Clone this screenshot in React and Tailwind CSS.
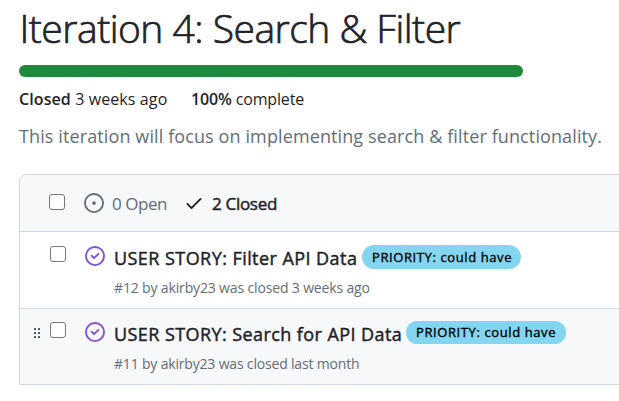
function Checkbox() {
  return (
    <span
      role="checkbox"
      aria-checked="false"
      className="block h-4 w-4 shrink-0 rounded-[3px] border border-[#767676] bg-white"
    />
  );
}

function OpenIcon() {
  return (
    <svg width="20" height="20" viewBox="0 0 16 16" fill="#656d76" className="ml-[18.5px] block shrink-0">
      <path d="M8 9.5a1.5 1.5 0 1 0 0-3 1.5 1.5 0 0 0 0 3Z" />
      <path d="M8 0a8 8 0 1 1 0 16A8 8 0 0 1 8 0ZM1.5 8a6.5 6.5 0 1 0 13 0 6.5 6.5 0 0 0-13 0Z" />
    </svg>
  );
}

function CheckIcon() {
  return (
    <svg width="20" height="20" viewBox="0 0 16 16" fill="#1f2328" className="ml-[17px] block shrink-0">
      <path d="M13.78 4.22a.75.75 0 0 1 0 1.06l-7.25 7.25a.75.75 0 0 1-1.06 0L2.22 9.28a.751.751 0 0 1 .018-1.042.751.751 0 0 1 1.042-.018L6 10.94l6.72-6.72a.75.75 0 0 1 1.06 0Z" />
    </svg>
  );
}

function ClosedIcon() {
  return (
    <svg width="20" height="20" viewBox="0 0 16 16" fill="#8250df" className="block">
      <path d="M11.28 6.78a.75.75 0 0 0-1.06-1.06L7.25 8.69 5.78 7.22a.75.75 0 0 0-1.06 1.06l2 2a.75.75 0 0 0 1.06 0l3.5-3.5Z" />
      <path d="M16 8A8 8 0 1 1 0 8a8 8 0 0 1 16 0Zm-1.5 0a6.5 6.5 0 1 0-13 0 6.5 6.5 0 0 0 13 0Z" />
    </svg>
  );
}

function DragHandle() {
  return (
    <svg width="8" height="11" viewBox="0 0 8 11" fill="#424a53" className="block">
      {[0, 4, 8].map((y) =>
        [0, 4].map((x) => <rect key={x + "-" + y} x={x} y={y} width="2" height="2" rx="0.6" />)
      )}
    </svg>
  );
}

function Issue({ title, titleClass, meta, metaClass, labelClass, hovered }) {
  return (
    <li
      className={
        hovered
          ? "flex h-[76px] border-t border-[#d8dee4] bg-[#f6f8fa]"
          : "flex h-[76px] bg-white"
      }
    >
      <div className="w-[30px] shrink-0 pt-[19px] pl-[14px]">{hovered && <DragHandle />}</div>
      <div className={hovered ? "w-[34.5px] shrink-0 pt-[13px]" : "w-[34.5px] shrink-0 pt-[14px]"}>
        <Checkbox />
      </div>
      <div className={hovered ? "w-[29.5px] shrink-0 pt-[13.4px]" : "w-[29.5px] shrink-0 pt-[14.4px]"}>
        <ClosedIcon />
      </div>
      <div className="min-w-0">
        <div className={hovered ? "flex h-[39px] items-start pt-[11px]" : "flex h-[40px] items-start pt-[12px]"}>
          <h3 className={"h-7 whitespace-nowrap text-lg leading-7 [-webkit-text-stroke:0.45px_#1f2328] " + titleClass}>{title}</h3>
          <span
            className={
              "ml-[5px] flex items-center rounded-full bg-[#84d5f0] pb-px pl-[10px] text-[13px] leading-5 whitespace-nowrap text-black [-webkit-text-stroke:0.35px_#000] " +
              labelClass
            }
          >
            PRIORITY: could have
          </span>
        </div>
        <p className={"mt-[6px] text-[14px] leading-5 whitespace-nowrap text-[#656d76] " + metaClass}>{meta}</p>
      </div>
    </li>
  );
}

export default function App() {
  return (
    <main className="h-[401px] overflow-hidden bg-white pl-[19px] font-['Open_Sans',sans-serif] text-[#1f2328]">
      <h1 className="h-[65px] pt-[2px] pl-[0.5px] text-[39px] leading-[52px] font-light whitespace-nowrap [-webkit-text-stroke:0.7px_#1f2328]">
        <span className="tracking-[-0.5px]">Iteration 4: Search &amp; Filter</span>
      </h1>
      <div className="h-3 w-[504px] rounded-full bg-[#1f883d]" />
      <div className="flex h-[44px] gap-6 pt-[10px] text-base leading-6 whitespace-nowrap">
        <span className="w-[148px] tracking-[0.1px]">
          <b className="font-semibold">Closed</b> 3 weeks ago
        </span>
        <span className="tracking-[-0.15px]">
          <b className="font-semibold">100%</b> complete
        </span>
      </div>
      <p className="h-[53px] text-lg leading-[30px] tracking-[0.11px] whitespace-nowrap text-[#656d76]">
        This iteration will focus on implementing search &amp; filter functionality.
      </p>
      <section className="h-[211px] w-[620px] rounded-tl-[8px] border border-[#d0d7de]">
        <header className="flex h-[57px] items-center rounded-tl-[7px] border-b border-[#d0d7de] bg-[#f6f8fa] pl-[29px] text-[17px] whitespace-nowrap">
          <div className="pb-[3px]">
            <Checkbox />
          </div>
          <OpenIcon />
          <span className="ml-[8.5px] w-[55px] pt-[2px] tracking-[-0.45px] text-[#656d76]">0 Open</span>
          <CheckIcon />
          <span className="ml-[8px] pt-[2px] tracking-[-0.3px] [-webkit-text-stroke:0.45px_#1f2328]">2 Closed</span>
        </header>
        <ul>
          <Issue
            title="USER STORY: Filter API Data"
            titleClass="w-[243px] tracking-[0.44px]"
            meta="#12 by akirby23 was closed 3 weeks ago"
            metaClass="tracking-[-0.15px]"
            labelClass="mt-px h-6 w-[159px] tracking-[0.6px]"
          />
          <Issue
            hovered
            title="USER STORY: Search for API Data"
            titleClass="w-[287px] tracking-[0.42px]"
            meta="#11 by akirby23 was closed last month"
            metaClass="tracking-[-0.18px]"
            labelClass="mt-px h-[23px] w-[160px] tracking-[0.6px]"
          />
        </ul>
      </section>
    </main>
  );
}
